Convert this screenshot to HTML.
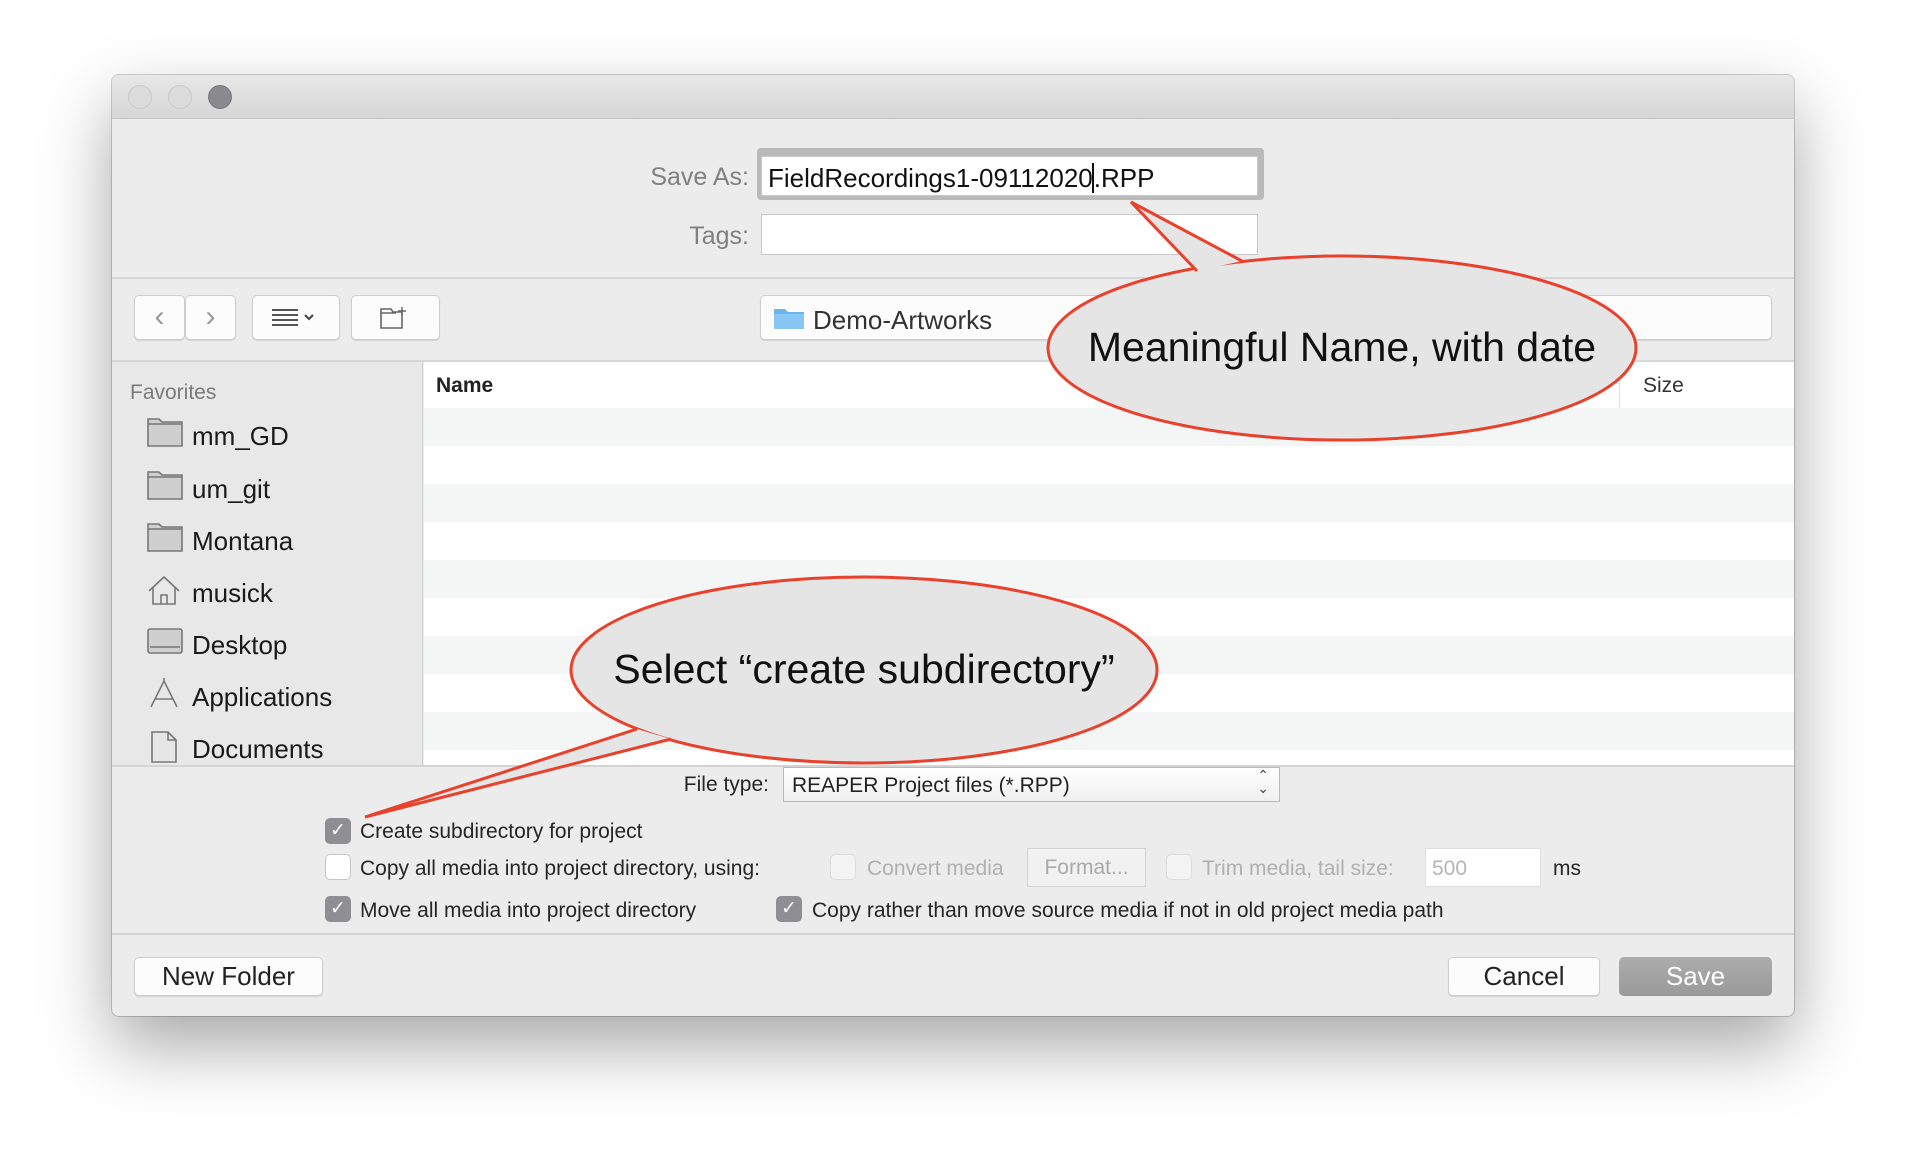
<!DOCTYPE html>
<html><head><meta charset="utf-8"><style>
*{box-sizing:border-box;margin:0;padding:0}
body{width:1906px;height:1164px;background:#fff;position:relative;overflow:hidden;font-family:"Liberation Sans",sans-serif;}
.a{position:absolute}
.win{left:112px;top:75px;width:1682px;height:941px;background:#ececec;border-radius:7px;box-shadow:0 30px 70px rgba(0,0,0,0.35),0 0 0 1px rgba(0,0,0,0.18);overflow:hidden}
.tb{left:0;top:0;width:1682px;height:44px;background:linear-gradient(#e8e8e8,#d6d6d6);border-bottom:1px solid #c4c4c4}
.tl{width:24px;height:24px;border-radius:50%;top:10px;background:#dcdcdc;border:1px solid #c8c8c8}
.lbl{color:#808080;font-size:25px;text-align:right}
.fld{background:#fff;border:1px solid #c8c8c8}
.btn{background:#fcfcfc;border:1px solid #cfcfcf;border-radius:5px;box-shadow:0 1px 1px rgba(0,0,0,0.12)}
.side{font-size:26px;color:#1a1a1a}
.cb{width:26px;height:26px;border-radius:5px;background:#8e8e93;color:#fff;font-size:19px;text-align:center;line-height:26px}
.cbe{width:26px;height:26px;border-radius:5px;background:#fff;border:1px solid #c6c6c6}
.cbd{width:26px;height:26px;border-radius:5px;background:#f3f3f3;border:1px solid #dcdcdc}
.t20{font-size:21px;color:#262626}
.dis{font-size:21px;color:#b0b0b0}
</style></head><body>
<div class="a win">
 <div class="a tb"></div>
 <div class="a tl" style="left:16px"></div>
 <div class="a tl" style="left:56px"></div>
 <div class="a tl" style="left:96px;background:#8a8a8e;border-color:#7a7a7e"></div>
 <div class="a lbl" style="left:400px;top:88px;width:237px">Save As:</div>
 <div class="a" style="left:645px;top:73px;width:507px;height:52px;border-radius:4px;background:#b9b9b9"></div>
 <div class="a fld" style="left:649px;top:81px;width:497px;height:40px;font-size:26px;color:#111;padding:6px 0 0 6px">FieldRecordings1-09112020<span style="border-left:2px solid #111;margin-left:-1px"></span>.RPP</div>
 <div class="a lbl" style="left:400px;top:147px;width:237px">Tags:</div>
 <div class="a fld" style="left:649px;top:139px;width:497px;height:41px"></div>
 <div class="a" style="left:0;top:202px;width:1682px;height:2px;background:#d6d6d6"></div>
 <div class="a btn" style="left:22px;top:220px;width:51px;height:45px;color:#999;font-size:30px;text-align:center;line-height:42px">&#x2039;</div>
 <div class="a btn" style="left:73px;top:220px;width:51px;height:45px;color:#999;font-size:30px;text-align:center;line-height:42px">&#x203A;</div>
 <div class="a btn" style="left:140px;top:220px;width:88px;height:45px">
  <svg width="88" height="45"><g stroke="#555" stroke-width="2"><line x1="19" y1="14" x2="45" y2="14"/><line x1="19" y1="19" x2="45" y2="19"/><line x1="19" y1="24" x2="45" y2="24"/><line x1="19" y1="29" x2="45" y2="29"/></g><path d="M52 19 l4 4 l4 -4" fill="none" stroke="#444" stroke-width="2"/></svg></div>
 <div class="a btn" style="left:239px;top:220px;width:89px;height:45px">
  <svg width="89" height="45"><path d="M29 13 h10 l2 3 h9 v16 h-21z M29 17 h15" fill="none" stroke="#666" stroke-width="1.6"/><path d="M50 11 v8 M46 15 h8" stroke="#666" stroke-width="1.5"/></svg></div>
 <div class="a btn" style="left:648px;top:220px;width:1012px;height:45px">
  <svg class="a" style="left:12px;top:10px" width="32" height="24"><path d="M1 3 h11 l3 3 h16 v17 h-30z" fill="#6cb5ea"/><path d="M1 8 h30 v15 h-30z" fill="#88c7f4"/></svg>
  <div class="a" style="left:52px;top:9px;font-size:26px;color:#333">Demo-Artworks</div></div>
 <div class="a" style="left:0;top:285px;width:1682px;height:2px;background:#d6d6d6"></div>
 <div class="a" style="left:0;top:287px;width:311px;height:403px;background:#e8e8e8;border-right:1px solid #d2d2d2"></div>
 <div class="a" style="left:18px;top:306px;font-size:21px;color:#7a7a7a">Favorites</div>
 <div class="a side" style="left:80px;top:346px">mm_GD</div>
 <div class="a side" style="left:80px;top:399px">um_git</div>
 <div class="a side" style="left:80px;top:451px">Montana</div>
 <div class="a side" style="left:80px;top:503px">musick</div>
 <div class="a side" style="left:80px;top:555px">Desktop</div>
 <div class="a side" style="left:80px;top:607px">Applications</div>
 <div class="a side" style="left:80px;top:659px">Documents</div>
 <svg class="a" style="left:34px;top:340px" width="40" height="360" fill="none" stroke="#777" stroke-width="1.6">
  <path d="M2 4 h11 l3 3 h20 v24 h-34z" fill="#cfcfcf"/><path d="M2 9 h34"/>
  <path d="M2 57 h11 l3 3 h20 v24 h-34z" fill="#cfcfcf"/><path d="M2 62 h34"/>
  <path d="M2 109 h11 l3 3 h20 v24 h-34z" fill="#cfcfcf"/><path d="M2 114 h34"/>
  <path d="M3 176 l15 -14 l15 14 M7 172 v17 h22 v-17 M15 189 v-9 h6 v9"/>
  <rect x="2" y="214" width="34" height="24" rx="2" fill="#cfcfcf"/><path d="M4 232 h30"/>
  <path d="M5 292 l13 -26 l13 26 M9 284 h18 M18 266 v-3"/>
  <path d="M6 317 h16 l8 8 v22 h-24z M22 317 v8 h8" fill="#e6e6e6"/>
 </svg>
 <div class="a" style="left:312px;top:287px;width:1370px;height:403px;background:#fff"></div>
 <div class="a" style="left:324px;top:299px;font-size:21px;font-weight:bold;color:#222">Name</div>
 <div class="a" style="left:1507px;top:287px;width:1px;height:46px;background:#ddd"></div>
 <div class="a" style="left:1531px;top:299px;font-size:21px;color:#333">Size</div>
 <div class="a" style="left:312px;top:333px;width:1370px;height:38px;background:#f4f5f5"></div>
 <div class="a" style="left:312px;top:409px;width:1370px;height:38px;background:#f4f5f5"></div>
 <div class="a" style="left:312px;top:485px;width:1370px;height:38px;background:#f4f5f5"></div>
 <div class="a" style="left:312px;top:561px;width:1370px;height:38px;background:#f4f5f5"></div>
 <div class="a" style="left:312px;top:637px;width:1370px;height:38px;background:#f4f5f5"></div>
 <div class="a" style="left:0;top:690px;width:1682px;height:2px;background:#d4d4d4"></div>
 <div class="a t20" style="left:560px;top:698px;width:97px;text-align:right">File type:</div>
 <div class="a" style="left:671px;top:692px;width:497px;height:35px;background:linear-gradient(#fff,#f0f0f0);border:1px solid #b8b8b8;font-size:21px;color:#222;padding:6px 0 0 8px">REAPER Project files (*.RPP)<span class="a" style="right:10px;top:1px;font-size:14px;line-height:13px;color:#444;text-align:center">&#x2303;<br>&#x2304;</span></div>
 <div class="a cb" style="left:213px;top:743px">&#10003;</div>
 <div class="a t20" style="left:248px;top:745px">Create subdirectory for project</div>
 <div class="a cbe" style="left:213px;top:779px"></div>
 <div class="a t20" style="left:248px;top:782px">Copy all media into project directory, using:</div>
 <div class="a cbd" style="left:718px;top:779px"></div>
 <div class="a dis" style="left:755px;top:782px">Convert media</div>
 <div class="a" style="left:915px;top:773px;width:119px;height:39px;background:#f1f1f1;border:1px solid #d4d4d4;text-align:center;font-size:21px;color:#aaa;line-height:37px">Format...</div>
 <div class="a cbd" style="left:1054px;top:779px"></div>
 <div class="a dis" style="left:1090px;top:782px">Trim media, tail size:</div>
 <div class="a" style="left:1313px;top:773px;width:116px;height:39px;background:#fff;border:1px solid #dedede;font-size:21px;color:#b5b5b5;padding:8px 0 0 6px">500</div>
 <div class="a t20" style="left:1441px;top:782px">ms</div>
 <div class="a cb" style="left:213px;top:821px">&#10003;</div>
 <div class="a t20" style="left:248px;top:824px">Move all media into project directory</div>
 <div class="a cb" style="left:664px;top:821px">&#10003;</div>
 <div class="a t20" style="left:700px;top:824px">Copy rather than move source media if not in old project media path</div>
 <div class="a" style="left:0;top:858px;width:1682px;height:2px;background:#d4d4d4"></div>
 <div class="a btn" style="left:22px;top:882px;width:189px;height:39px;font-size:26px;color:#222;text-align:center;line-height:37px">New Folder</div>
 <div class="a btn" style="left:1336px;top:882px;width:152px;height:39px;font-size:26px;color:#222;text-align:center;line-height:37px">Cancel</div>
 <div class="a" style="left:1507px;top:882px;width:153px;height:39px;border-radius:5px;background:linear-gradient(#acacac,#9a9a9a);font-size:26px;color:#fff;text-align:center;line-height:39px">Save</div>
</div>
<svg class="a" style="left:0;top:0" width="1906" height="1164">
 <g fill="#e5e5e5" stroke="#e8412c" stroke-width="3">
  <ellipse cx="1342" cy="348" rx="294" ry="92"/>
  <path d="M1197 271 L1131 202 L1242 261" stroke-linejoin="miter"/>
  <ellipse cx="864" cy="670" rx="293" ry="93"/>
  <path d="M637 729 L365 817 L671 739"/>
 </g>
 <g fill="#e5e5e5"><path d="M1192 275 L1250 265 L1250 290 L1190 290z"/><path d="M632 722 L680 735 L680 700 L630 700z"/></g>
 <text x="1342" y="361" font-family="Liberation Sans, sans-serif" font-size="41" text-anchor="middle" fill="#111">Meaningful Name, with date</text>
 <text x="864" y="683" font-family="Liberation Sans, sans-serif" font-size="41" text-anchor="middle" fill="#111">Select “create subdirectory”</text>
</svg>
</body></html>
